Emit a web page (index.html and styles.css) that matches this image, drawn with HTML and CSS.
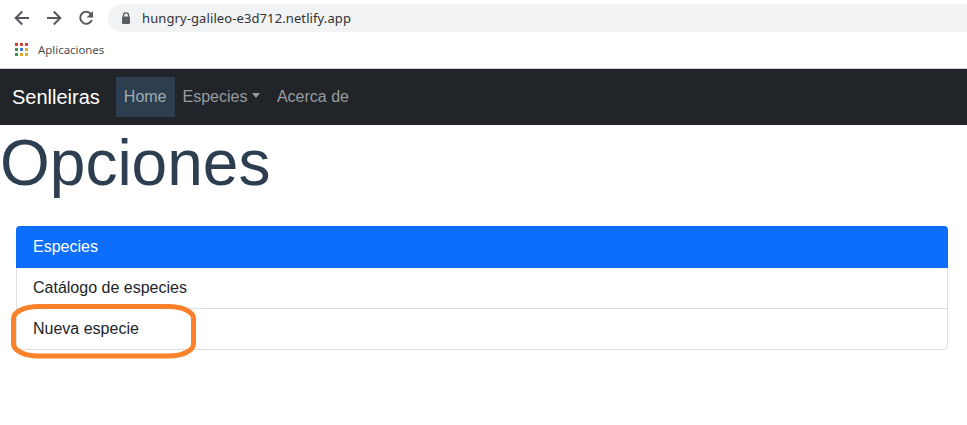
FILE: index.html
```html
<!DOCTYPE html>
<html lang="es">
<head>
<meta charset="utf-8">
<title>Senlleiras</title>
<link rel="stylesheet" href="styles.css">
</head>
<body>
<header class="browser">
  <div class="toolbar">
    <svg class="tool" viewBox="0 0 16 16"><path d="M15 8H2M8.2 1.5L1.7 8l6.5 6.5"/></svg>
    <svg class="tool" viewBox="0 0 16 16"><path d="M1 8h13M7.8 1.5L14.3 8l-6.5 6.5"/></svg>
    <svg class="tool" viewBox="0 0 16 16"><path d="M13.2 4.4A6 6 0 1 0 13.8 10"/><path class="solid" d="M15 1v6.4H8.6z"/></svg>
    <div class="address">
      <svg class="lock" viewBox="0 0 10 13"><path class="shackle" d="M2.4 5V3.4a2.6 2.6 0 0 1 5.2 0V5"/><rect x="1" y="4.5" width="8" height="7.5" rx="1"/></svg>
      <span class="url">hungry-galileo-e3d712.netlify.app</span>
    </div>
  </div>
  <div class="bookmarks">
    <svg class="apps" viewBox="0 0 13 13">
      <path fill="#d0453e" d="M0 0h3v3H0zM5 0h3v3H5zM10 0h3v3h-3z"/>
      <path fill="#3d9457" d="M0 5h3v3H0zM0 10h3v3H0z"/>
      <path fill="#3a7de0" d="M5 5h3v3H5z"/>
      <path fill="#e0ac2c" d="M10 5h3v3h-3zM5 10h3v3H5zM10 10h3v3h-3z"/>
    </svg>
    <span class="apps-label">Aplicaciones</span>
  </div>
</header>
<nav class="navbar">
  <a class="brand">Senlleiras</a>
  <a class="nav-link active">Home</a>
  <a class="nav-link dropdown">Especies</a>
  <a class="nav-link">Acerca de</a>
</nav>
<main>
  <h1>Opciones</h1>
  <ul class="list">
    <li class="item selected">Especies</li>
    <li class="item">Catálogo de especies</li>
    <li class="item">Nueva especie
      <svg class="marker" viewBox="0 0 186 56"><rect x="2.500" y="3.500" width="180" height="49.500" rx="25" ry="12"/></svg>
    </li>
  </ul>
</main>
</body>
</html>
```

FILE: styles.css
```css
* { box-sizing: border-box; }
body {
  margin: 0;
  min-height: 100vh;
  background: #fff;
  color: #212529;
  font: 16px/24px "Liberation Sans", Arial, sans-serif;
}
.browser {
  height: 69px;
  border-bottom: 1px solid #d0d1d4;
  font-family: "Noto Sans", sans-serif;
}
.toolbar {
  display: flex;
  align-items: center;
  height: 36px;
  padding-left: 14px;
}
.tool {
  flex: none;
  width: 16px;
  height: 16px;
  margin-right: 16px;
  fill: none;
  stroke: #55595e;
  stroke-width: 2;
}
.tool .solid { fill: #55595e; stroke: none; }
.address {
  flex: 1;
  display: flex;
  align-items: center;
  height: 28px;
  margin-left: -2px;
  padding-left: 13px;
  border-radius: 14px 0 0 14px;
  background: #f1f3f4;
}
.lock { width: 10px; height: 13px; fill: #5a5e63; }
.shackle { fill: none; stroke: #5a5e63; stroke-width: 1.3; }
.url { margin-left: 11px; font-size: 13px; letter-spacing: 0.1px; color: #303236; }
.bookmarks {
  display: flex;
  align-items: center;
  height: 28px;
  padding-left: 15px;
}
.apps { width: 13px; height: 13px; position: relative; top: -1px; }
.apps-label { margin-left: 10px; font-size: 11.4px; color: #4b4e52; }
.navbar {
  display: flex;
  align-items: center;
  height: 56px;
  padding: 0 12px;
  background: #212529;
}
.brand { margin-right: 16px; font-size: 20px; line-height: 30px; color: #fff; }
.nav-link { padding: 8px; color: #999b9d; }
.active { background: #2c3e50; color: #a3abb3; }
.dropdown::after {
  content: "";
  display: inline-block;
  margin-left: 4.5px;
  vertical-align: 4px;
  border: 4.8px solid transparent;
  border-top-width: 5px;
  border-top-color: currentColor;
  border-bottom: 0;
}
.dropdown { padding-right: 9px; }
h1 {
  margin: 0 0 24px;
  font-size: 64px;
  font-weight: 400;
  line-height: 77px;
  color: #2c3e50;
}
.list {
  margin: 0 19px 0 16px;
  padding: 0;
  list-style: none;
  border: 1px solid #dfdfdf;
  border-radius: 4px;
}
.item { position: relative; height: 41px; padding: 8px 16px; border-bottom: 1px solid #dfdfdf; }
.item:last-child { height: 40px; border-bottom: 0; }
.selected {
  margin: -1px -1px 0;
  height: 42px;
  padding: 9px 17px 8px;
  border: 0;
  border-radius: 4px 4px 0 0;
  background: #0d6efd;
  color: #fff;
}
.marker {
  position: absolute;
  left: -6px;
  top: -6px;
  width: 186px;
  height: 56px;
  fill: none;
  stroke: #fb812b;
  stroke-width: 5;
}
```
